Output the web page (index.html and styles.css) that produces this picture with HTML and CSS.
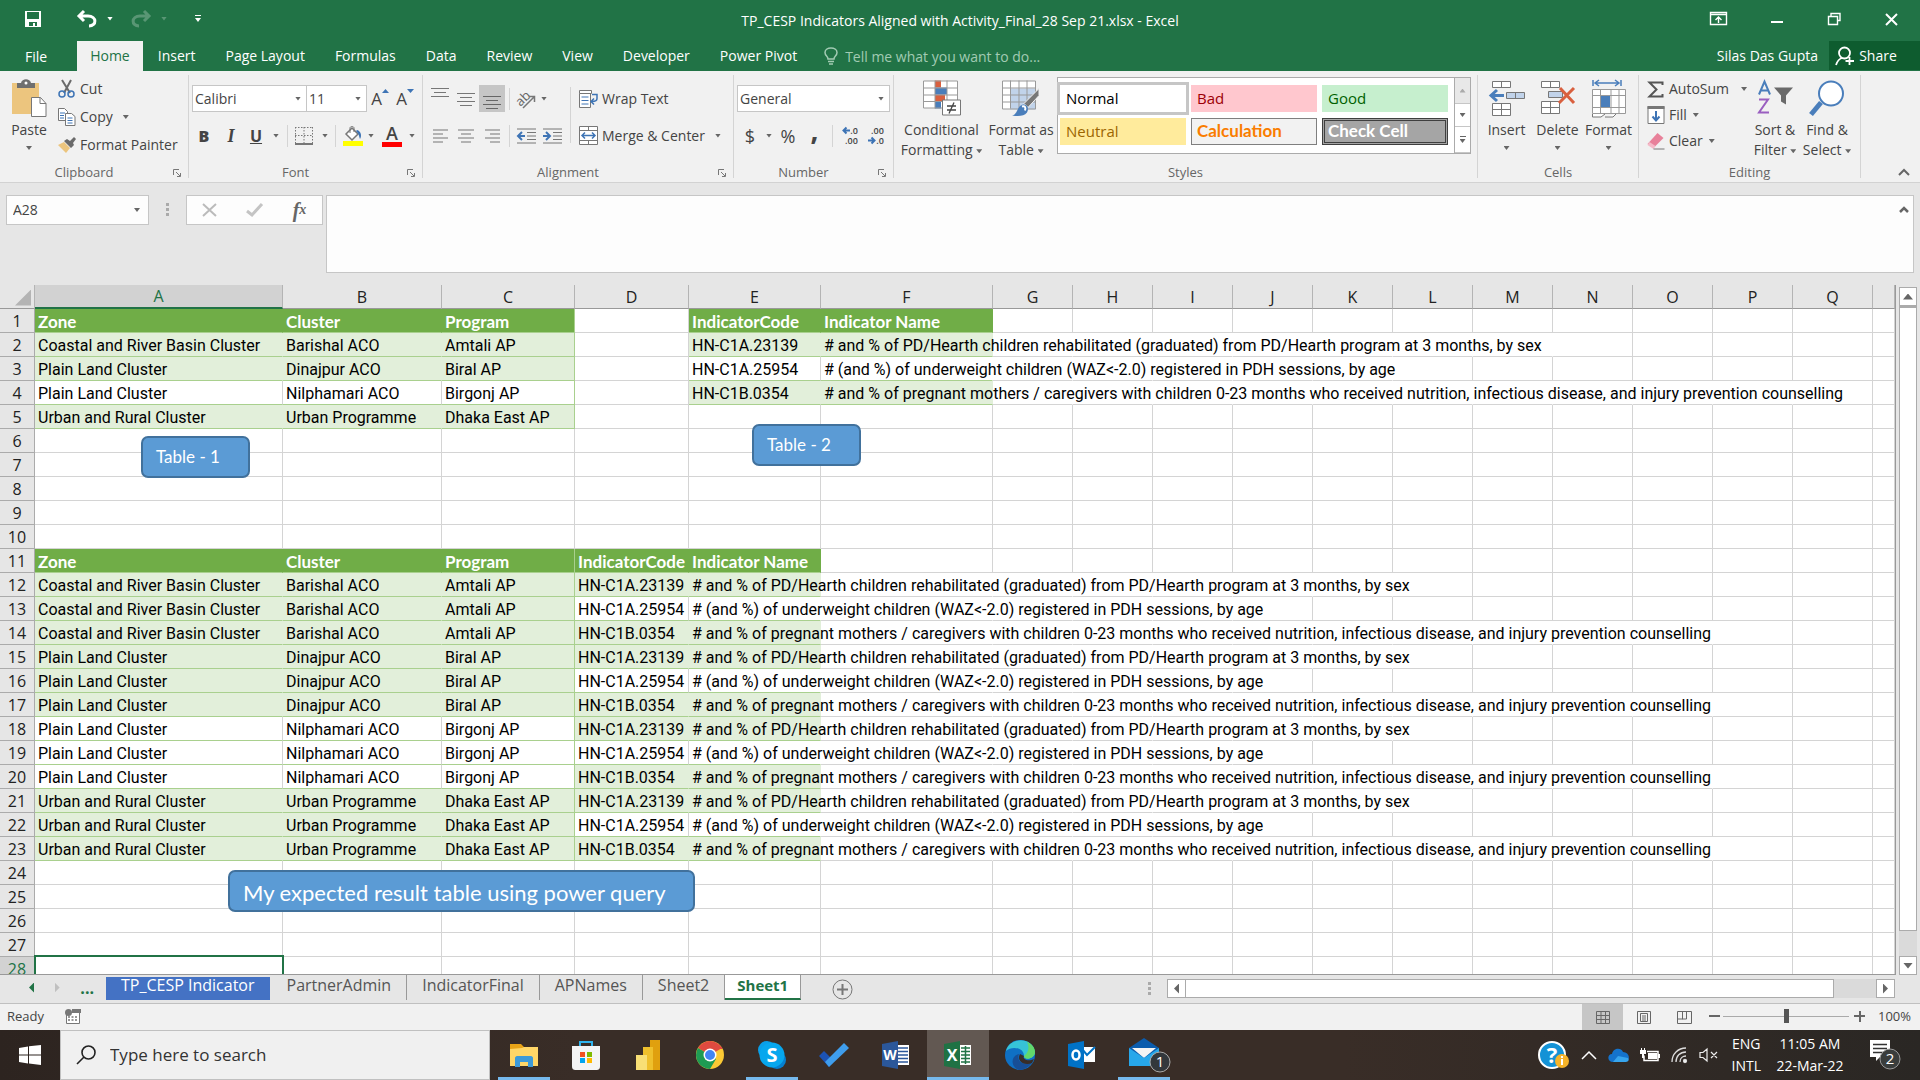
FILE: index.html
```html
<!DOCTYPE html>
<html lang="en">
<head>
<meta charset="utf-8">
<title>TP_CESP Indicators Aligned with Activity_Final_28 Sep 21.xlsx - Excel</title>
<link rel="stylesheet" href="styles.css">
</head>
<body>
<header class="titlebar">
  <div class="quick">
    <button aria-label="Save"><svg width="18" height="18" viewBox="0 0 18 18"><path d="M1 1h16v16H1z" fill="#fff"/><path d="M3 2h12v7H3zM5 12h8v4h-2v-3H9v3H5z" fill="#217346"/></svg></button>
    <button class="q-undo" aria-label="Undo"><svg width="20" height="18" viewBox="0 0 20 18"><path d="M7 1L2 6l5 5M2 6h9c9 0 9 10 1 10" fill="none" stroke="#fff" stroke-width="3"/></svg><i class="caret"></i></button>
    <button class="q-redo" aria-label="Redo"><svg width="20" height="18" viewBox="0 0 20 18"><path d="M13 1l5 5-5 5M18 6H9C0 6 0 16 8 16" fill="none" stroke="#fff" stroke-width="3"/></svg><i class="caret"></i></button>
    <button class="q-more" aria-label="Customize"><i class="bar"></i><i class="caret"></i></button>
  </div>
  <h1>TP_CESP Indicators Aligned with Activity_Final_28 Sep 21.xlsx - Excel</h1>
  <div class="window-buttons">
    <button aria-label="Ribbon display"><svg width="17" height="14" viewBox="0 0 17 14" fill="none" stroke="#fff"><path d="M.5.5h16v12H.5zM.5 2.500h16M8.500 11V5M5.500 8l3-3 3 3" stroke-width="1.400"/></svg></button>
    <button aria-label="Minimize"><svg width="13" height="14" viewBox="0 0 13 14"><path d="M0 9h12v2H0z" fill="#fff"/></svg></button>
    <button aria-label="Restore"><svg width="13" height="14" viewBox="0 0 13 14" fill="none" stroke="#fff"><path d="M.5 4.500h9v8h-9zM3 4V1.500h9v7H9.500" stroke-width="1.400"/></svg></button>
    <button aria-label="Close"><svg width="13" height="13" viewBox="0 0 13 13"><path d="M1 1l11 11M12 1L1 12" stroke="#fff" stroke-width="2"/></svg></button>
  </div>
</header>
<nav class="tabs">
  <a href="#" class="file">File</a><a href="#" class="on">Home</a><a href="#">Insert</a><a href="#">Page Layout</a><a href="#">Formulas</a><a href="#">Data</a><a href="#">Review</a><a href="#">View</a><a href="#">Developer</a><a href="#">Power Pivot</a>
  <button class="tell"><svg width="14" height="18" viewBox="0 0 14 18" fill="none" stroke="#a2cbb3" stroke-width="1.500"><path d="M4 12c0-3-3-3-3-6.500C1 2.500 4 1 7 1s6 1.500 6 4.500C13 9 10 9 10 12zM4 14.500h6M5 17h4"/></svg>Tell me what you want to do...</button>
  <span class="user">Silas Das Gupta</span>
  <button class="share"><svg width="20" height="20" viewBox="0 0 20 20" fill="none" stroke="#fff" stroke-width="1.800"><circle cx="9.500" cy="7" r="5.500"/><path d="M7 12c-4 1-5 4-6 7M14.500 11v8M10.500 15h8.500"/></svg>Share</button>
</nav>

<section class="ribbon">
  <div class="group g-clip">
    <div class="body">
      <button class="big paste"><svg width="35" height="39" viewBox="0 0 35 39"><path d="M0 4h27v31H0z" fill="#ecc57e"/><path d="M5 9V4h4c1-5 9-5 10 0h4v5z" fill="#6f6f6f"/><circle cx="14" cy="4" r="1.500" fill="#fff"/><path d="M19.500 18.500h9l5.500 6v13H19.500z" fill="#fff" stroke="#777"/><path d="M28 18.500v6h6" fill="none" stroke="#777"/></svg><span>Paste</span><i class="caret"></i></button>
      <div class="stack">
        <button class="line"><svg width="18" height="18" viewBox="0 0 18 18" fill="none"><path d="M4 0l8 13M13 0L6 13" stroke="#6a6a6a" stroke-width="2"/><circle cx="4" cy="14" r="3" stroke="#3e74b5" stroke-width="1.500"/><circle cx="13" cy="14" r="3" stroke="#3e74b5" stroke-width="1.500"/></svg>Cut</button>
        <button class="line"><svg width="18" height="18" viewBox="0 0 18 18"><g fill="#fff" stroke="#777"><path d="M.5.5h6l3 3v9h-9z"/><path d="M7.500 5.500h6l3.500 3v9H7.500z"/></g><path d="M2 5h5M2 7.500h4M2 10h4M9.500 10h5M9.500 12.500h5M9.500 15h5" stroke="#3e74b5"/></svg>Copy<i class="caret"></i></button>
        <button class="line"><svg width="18" height="16" viewBox="0 0 18 16"><path d="M0 8l6-3 6 6-4 5z" fill="#ecc57e"/><path d="M6 4l3-2 3 2 4-4 2 2-3 4 1 2-3 3z" fill="#6a6a6a"/></svg>Format Painter</button>
      </div>
    </div>
    <footer>Clipboard<svg class="launch" width="8" height="8" viewBox="0 0 8 8"><path d="M.5 6V.5H6M3 3l4 4M7.500 4v3.500H4" fill="none" stroke="#777"/></svg></footer>
  </div>

  <div class="group g-font">
    <div class="body rows">
      <div class="row font-a">
        <label class="combo"><select aria-label="Font"><option>Calibri</option></select><i class="caret"></i></label>
        <label class="combo"><select aria-label="Font size"><option>11</option></select><i class="caret"></i></label>
        <button class="grow">A<svg width="7" height="4" viewBox="0 0 7 4"><path d="M0 4l3.500-4L7 4z" fill="#3e74b5"/></svg></button>
        <button class="grow">A<svg width="7" height="4" viewBox="0 0 7 4"><path d="M0 0l3.500 4L7 0z" fill="#3e74b5"/></svg></button>
      </div>
      <div class="row font-b">
        <button class="ltr"><b>B</b></button><button class="ltr serif"><i>I</i></button><button class="ltr"><u>U</u></button><i class="caret"></i><i class="sep"></i>
        <button aria-label="Borders"><svg width="18" height="18" viewBox="0 0 18 18" fill="none" stroke="#777"><path d="M.5 0v17M9 0v17M17.500 0v17M0 .5h18M0 8.500h18" stroke-dasharray="1.500 1.500"/><path d="M0 17h18" stroke-width="2"/></svg></button><i class="caret"></i><i class="sep"></i>
        <button aria-label="Fill color"><svg width="20" height="20" viewBox="0 0 20 20"><path d="M9 2l6 6-6 6-6-6z" fill="#fff" stroke="#777" stroke-width="1.500"/><path d="M7 7V2c0-2 4-2 4 0v4" fill="none" stroke="#777"/><path d="M14 4c4 1 5 6 3 9-1-3-1-5-4-8z" fill="#3e74b5"/><path d="M0 15h20v5H0z" fill="#ff0"/></svg></button><i class="caret"></i>
        <button class="fontcolor" aria-label="Font color">A</button><i class="caret"></i>
      </div>
    </div>
    <footer>Font<svg class="launch" width="8" height="8" viewBox="0 0 8 8"><path d="M.5 6V.5H6M3 3l4 4M7.500 4v3.500H4" fill="none" stroke="#777"/></svg></footer>
  </div>

  <div class="group g-align">
    <div class="body">
      <div class="rows align-l">
        <div class="row align-a">
          <button aria-label="Top align"><svg class="up" width="18" height="16" viewBox="0 0 18 16"><path d="M0 1.500h18M3 5.500h12M0 9.500h18" stroke="#777" stroke-width="1.200"/></svg></button>
          <button aria-label="Middle align"><svg width="18" height="16" viewBox="0 0 18 16"><path d="M0 2.500h18M3 6.500h12M0 10.500h18M3 14.500h12" stroke="#777" stroke-width="1.200"/></svg></button>
          <button class="pressed" aria-label="Bottom align"><svg width="18" height="20" viewBox="0 0 18 20"><path d="M0 7.500h18M3 11.500h12M0 15.500h18M3 19.500h12" stroke="#666" stroke-width="1.200"/></svg></button>
          <i class="sep"></i>
          <button aria-label="Orientation"><svg width="20" height="20" viewBox="0 0 20 20"><text x="-1" y="15" font-size="13" fill="#666" transform="rotate(-45 5 11)">ab</text><path d="M6 19L17 8M12 7.500h5.500V13" fill="none" stroke="#777" stroke-width="1.500"/></svg></button><i class="caret"></i>
        </div>
        <div class="row align-b">
          <button aria-label="Align left"><svg width="15" height="14" viewBox="0 0 15 14"><path d="M0 1h15M0 5h10M0 9h15M0 13h10" stroke="#777" stroke-width="1.200"/></svg></button>
          <button aria-label="Center"><svg width="16" height="14" viewBox="0 0 16 14"><path d="M0 1h16M3 5h10M0 9h16M3 13h10" stroke="#777" stroke-width="1.200"/></svg></button>
          <button aria-label="Align right"><svg width="15" height="14" viewBox="0 0 15 14"><path d="M0 1h15M5 5h10M0 9h15M5 13h10" stroke="#777" stroke-width="1.200"/></svg></button>
          <i class="sep"></i>
          <button aria-label="Decrease indent"><svg width="19" height="16" viewBox="0 0 19 16" fill="none"><path d="M0 1h19M10 4.500h9M10 8h9M10 11.500h9M0 15h19" stroke="#777"/><path d="M8 8H2M5 4L1 8l4 4" stroke="#3e74b5" stroke-width="2"/></svg></button>
          <button aria-label="Increase indent"><svg width="19" height="16" viewBox="0 0 19 16" fill="none"><path d="M0 1h19M10 4.500h9M10 8h9M10 11.500h9M0 15h19" stroke="#777"/><path d="M0 8h6M3 4l4 4-4 4" stroke="#3e74b5" stroke-width="2"/></svg></button>
        </div>
      </div>
      <i class="sep tall"></i>
      <div class="rows">
        <button class="line row"><svg width="19" height="18" viewBox="0 0 19 18" fill="none"><path d="M.5.500h12v3H.5zM.5 3.500v14h11v-14" fill="#fff" stroke="#777"/><path d="M2.500 7h7M2.500 10.500h7M2.500 14h7" stroke="#3e74b5"/><path d="M13 4.500h5v4c0 2-2 3-5 3M15 8.500l-3 3 3 3" stroke="#3e74b5" stroke-width="1.500"/></svg>Wrap Text</button>
        <button class="line row"><svg width="19" height="19" viewBox="0 0 19 19" fill="none"><path d="M.500.500h18v18H.500zM0 4.500h19M0 14.500h19M9.500 0v4.500M9.500 14.500V19" fill="#fff" stroke="#777"/><path d="M3 9.500h13M6 6.500l-3 3 3 3M13 6.500l3 3-3 3" stroke="#3e74b5" stroke-width="1.500"/></svg>Merge &amp; Center<i class="caret"></i></button>
      </div>
    </div>
    <footer>Alignment<svg class="launch" width="8" height="8" viewBox="0 0 8 8"><path d="M.5 6V.5H6M3 3l4 4M7.500 4v3.500H4" fill="none" stroke="#777"/></svg></footer>
  </div>

  <div class="group g-number">
    <div class="body rows">
      <label class="combo row"><select aria-label="Number format"><option>General</option></select><i class="caret"></i></label>
      <div class="row num-b">
        <button class="sym">$</button><i class="caret"></i><button class="sym">%</button><button class="sym comma">,</button><i class="sep"></i>
        <button class="dec"><span><svg width="8" height="7" viewBox="0 0 8 7"><path d="M8 3.500H2M4.500.5l-3 3 3 3" fill="none" stroke="#3e74b5" stroke-width="2"/></svg>.0</span><span>.00</span></button>
        <button class="dec"><span>.00</span><span><svg width="8" height="7" viewBox="0 0 8 7"><path d="M0 3.500h6M3.500.5l3 3-3 3" fill="none" stroke="#3e74b5" stroke-width="2"/></svg>.0</span></button>
      </div>
    </div>
    <footer>Number<svg class="launch" width="8" height="8" viewBox="0 0 8 8"><path d="M.5 6V.5H6M3 3l4 4M7.500 4v3.500H4" fill="none" stroke="#777"/></svg></footer>
  </div>

  <div class="group g-styles">
    <div class="body">
      <button class="big cond"><svg width="38" height="36" viewBox="0 0 38 36"><path d="M.5.5h34v27H.5z" fill="#fff"/><path d="M12 0h6v7h-6zM12 14h10v7H12z" fill="#d9603f"/><path d="M12 7h12v7H12zM12 21h6v7h-6z" fill="#4a7ebb"/><path d="M.5.5h34v27H.5zM0 7.500h35M0 14.500h35M0 21h35M12 0v28M24 0v28" fill="none" stroke="#999"/><path d="M19.500 19.500h18v15h-18z" fill="#fff" stroke="#777"/><path d="M24 25.500h9M24 29.500h9M31 22l-5 11" stroke="#444" stroke-width="1.300"/></svg><span>Conditional</span><span>Formatting <i class="caret"></i></span></button>
      <button class="big fmt"><svg width="38" height="36" viewBox="0 0 38 36"><path d="M.5.5h33v28H.5z" fill="#fff"/><path d="M8 8h26v21H8z" fill="#c1d3ea"/><path d="M.5.5h33v28H.5zM0 7.500h34M0 14.500h34M0 21.500h34M8.500 0v28M17 0v28M25 0v28" fill="none" stroke="#999"/><path d="M37 8v7L26 27l-4-4z" fill="#777" stroke="#f1f1f1"/><path d="M10 35c6-1 5-10 11-11 5-1 6 5 4 8-3 4-9 4-15 3z" fill="#4a7ebb"/><path d="M20 26c3-1 4 1 3 4" stroke="#fff" stroke-width="2" fill="none"/></svg><span>Format as</span><span>Table <i class="caret"></i></span></button>
      <div class="gallery">
        <div class="swatches">
          <button class="normal">Normal</button><button class="bad">Bad</button><button class="good">Good</button>
          <button class="neutral">Neutral</button><button class="calc">Calculation</button><button class="check">Check Cell</button>
        </div>
        <div class="spin"><button class="off" aria-label="Up"><i class="caret flip"></i></button><button aria-label="Down"><i class="caret"></i></button><button aria-label="More"><i class="bar"></i><i class="caret"></i></button></div>
      </div>
    </div>
    <footer>Styles</footer>
  </div>

  <div class="group g-cells">
    <div class="body">
      <button class="big"><svg width="36" height="37" viewBox="0 0 36 37"><g fill="#fff" stroke="#777"><path d="M3.500 1.500h18v6h-18zM12.500 1.500v6M3.500 23.500h18v12h-18zM3.500 29.500h18M12.500 23.500v12"/><path d="M17.500 12.500h18v6h-18zM26.500 12.500v6" fill="#c1d3ea"/></g><path d="M15 15.500H2M8 10l-6 5.500L8 21" fill="none" stroke="#4a7ebb" stroke-width="3"/></svg><span>Insert</span><i class="caret"></i></button>
      <button class="big"><svg width="36" height="37" viewBox="0 0 36 37"><g fill="#fff" stroke="#777"><path d="M1.500 1.500h18v6h-18zM10.500 1.500v6M1.500 21.500h18v12h-18zM1.500 27.500h18M10.500 21.500v12"/><path d="M8.500 11.500h14v6h-14z" fill="#c1d3ea"/></g><path d="M20 8l14 15M34 8L19 23" fill="none" stroke="#d9603f" stroke-width="3"/></svg><span>Delete</span><i class="caret"></i></button>
      <button class="big"><svg width="36" height="39" viewBox="0 0 36 39"><path d="M2 1v6M30 1v6M4 4h24M8 1L4 4l4 3M24 1l4 3-4 3" fill="none" stroke="#4a7ebb" stroke-width="1.500"/><path d="M1.500 10.500h33v24h-33zM1 16.500h34M1 28.500h34M9.500 10v25M20 10v25M28 10v25" fill="#fff" stroke="#999"/><path d="M10 17h9v11h-9z" fill="#4a7ebb"/><path d="M1.500 35v3H10l4-3M14 38h8l3-3" fill="#fff" stroke="#777"/></svg><span>Format</span><i class="caret"></i></button>
    </div>
    <footer>Cells</footer>
  </div>

  <div class="group g-edit">
    <div class="body">
      <div class="stack">
        <button class="line"><svg width="17" height="17" viewBox="0 0 17 17"><path d="M15 4V1.500H2L9 8.500 2 15.500h13V13" fill="none" stroke="#555" stroke-width="2"/></svg>AutoSum<i class="caret"></i></button>
        <button class="line"><svg width="17" height="18" viewBox="0 0 17 18"><path d="M.5.5h16v17H.5z" fill="#fff" stroke="#777"/><path d="M0 0h17v3H0z" fill="#777"/><path d="M8.500 5v9M5 10.500l3.500 4 3.500-4" fill="none" stroke="#3e74b5" stroke-width="2"/></svg>Fill<i class="caret"></i></button>
        <button class="line"><svg width="17" height="17" viewBox="0 0 17 17"><path d="M0 11L10 0l6 5L6 15z" fill="#e8819a"/><path d="M2 9l6 4-2 3-6-4z" fill="#f5b9c7"/><path d="M6 16h11" stroke="#777"/></svg>Clear<i class="caret"></i></button>
      </div>
      <button class="big"><svg width="35" height="36" viewBox="0 0 35 36"><g fill="none" stroke-width="2"><path d="M1 14L6.500 1 12 14M3 10h7" stroke="#4a7ebb"/><path d="M1 19h9L1 32h10" stroke="#9a5fc0"/></g><path d="M16 7h19l-7 8v9l-5-3v-6z" fill="#6a6a6a"/></svg><span>Sort &amp;</span><span>Filter <i class="caret"></i></span></button>
      <button class="big"><svg width="36" height="36" viewBox="0 0 36 36"><path d="M12 22L2 34" stroke="#4a7ebb" stroke-width="5"/><circle cx="22" cy="13" r="12" fill="#fff" stroke="#4a7ebb" stroke-width="2"/></svg><span>Find &amp;</span><span>Select <i class="caret"></i></span></button>
    </div>
    <footer>Editing</footer>
  </div>
  <button class="collapse" aria-label="Collapse ribbon"><svg width="12" height="8" viewBox="0 0 12 8"><path d="M1 7l5-5 5 5" fill="none" stroke="#666" stroke-width="2"/></svg></button>
</section>

<section class="formula">
  <label class="namebox"><input aria-label="Name box" value="A28"><i class="caret"></i></label>
  <i class="dots"></i>
  <div class="fx">
    <button aria-label="Cancel"><svg width="15" height="14" viewBox="0 0 15 14"><path d="M1 1l13 12M14 1L1 13" stroke="#bbb" stroke-width="2"/></svg></button>
    <button aria-label="Enter"><svg width="17" height="14" viewBox="0 0 17 14"><path d="M1 8l5 4L16 1" fill="none" stroke="#c4c4c4" stroke-width="3"/></svg></button>
    <button class="fn" aria-label="Insert function">f<sub>x</sub></button>
  </div>
  <div class="entry"><textarea aria-label="Formula bar"></textarea><svg width="10" height="7" viewBox="0 0 10 7"><path d="M1 6l4-4 4 4" fill="none" stroke="#666" stroke-width="2.500"/></svg></div>
</section>

<main>
  <div class="sheet">
    <table id="grid"></table>
    <div class="selection"></div>
    <div class="shape one">Table - 1</div>
    <div class="shape two">Table - 2</div>
    <div class="shape three">My expected result table using power query</div>
  </div>
  <div class="vscroll"><button aria-label="Scroll up"><i class="caret flip"></i></button><div class="thumb"></div><div class="track"></div><button aria-label="Scroll down"><i class="caret"></i></button></div>
</main>

<section class="sheetbar">
  <div class="arrows"><i class="left"></i><i class="right"></i><b>...</b></div>
  <a href="#" class="blue">TP_CESP Indicator</a><a href="#">PartnerAdmin</a><a href="#">IndicatorFinal</a><a href="#">APNames</a><a href="#">Sheet2</a><a href="#" class="cur">Sheet1</a>
  <button class="add" aria-label="New sheet"><svg width="21" height="21" viewBox="0 0 21 21" fill="none" stroke="#777"><circle cx="10.500" cy="10.500" r="9.500"/><path d="M10.500 5v11M5 10.500h11" stroke-width="2"/></svg></button>
  <i class="dots"></i>
  <div class="hscroll"><button aria-label="Scroll left"><i class="left"></i></button><div class="thumb"></div><div class="track"></div><button aria-label="Scroll right"><i class="right"></i></button></div>
</section>

<section class="status">
  <span>Ready</span>
  <svg width="16" height="15" viewBox="0 0 16 15"><path d="M1.500 3.500h13v11h-13z" fill="#fff" stroke="#777"/><path d="M7 0h9v4H7z" fill="#777"/><circle cx="3.500" cy="3.500" r="3.500" fill="#777"/><path d="M3 8h10M3 11h10" stroke="#777" stroke-width="1.500" stroke-dasharray="2 1.500"/></svg>
  <div class="views">
    <button class="pressed" aria-label="Normal view"><svg width="14" height="13" viewBox="0 0 14 13"><path d="M.5.5h13v12H.5zM0 4.500h14M0 8.500h14M5 0v13M9.500 0v13" fill="none" stroke="#666"/></svg></button>
    <button aria-label="Page layout view"><svg width="14" height="13" viewBox="0 0 14 13"><path d="M.5.5h13v12H.5zM3.500 2.500h7v8h-7zM5 5h4M5 7h4M5 9h4" fill="none" stroke="#666"/></svg></button>
    <button aria-label="Page break view"><svg width="15" height="13" viewBox="0 0 15 13"><path d="M.5.5h14v12H.5zM5.500 0v8H0M9.500 0v8H5" fill="none" stroke="#666"/></svg></button>
  </div>
  <button class="minus" aria-label="Zoom out"></button><input type="range" aria-label="Zoom" min="0" max="200" value="101"><button class="plus" aria-label="Zoom in"></button>
  <span class="pct">100%</span>
</section>

<footer class="taskbar">
  <button class="start" aria-label="Start"><svg width="22" height="20" viewBox="0 0 22 20" fill="#fff"><path d="M0 3l9-1.500V9.500H0zM10 1.300L22 0v9.500H10zM0 10.500h9v8L0 17zM10 10.500h12V20l-12-1.500z"/></svg></button>
  <label class="search"><svg width="22" height="20" viewBox="0 0 22 20" fill="none" stroke="#222" stroke-width="1.600"><circle cx="13.500" cy="7.500" r="6.500"/><path d="M9 12l-7 7"/></svg><input placeholder="Type here to search"></label>
  <div class="apps">
    <button class="run" aria-label="File Explorer"><svg width="28" height="24" viewBox="0 0 28 24"><path d="M0 1h11l3 3h14v7H0z" fill="#e8a317"/><path d="M0 6l12-1 2-1h14v19H0z" fill="#ffd667"/><path d="M5 24V15c0-1 1-2 2-2h14c1 0 2 1 2 2v9h-5v-5h-8v5z" fill="#3d9ad8"/></svg></button>
    <button aria-label="Store"><svg width="28" height="30" viewBox="0 0 28 30"><path d="M8 7V2h12v5" fill="none" stroke="#30b4ee" stroke-width="2"/><path d="M0 6h28v20c0 3-1 4-4 4H4c-3 0-4-1-4-4z" fill="#f4f4f4"/><path d="M8 12h5v5H8z" fill="#f25022"/><path d="M15 12h5v5h-5z" fill="#7fba00"/><path d="M8 18h5v5H8z" fill="#00a4ef"/><path d="M15 18h5v5h-5z" fill="#ffb900"/></svg></button>
    <button aria-label="Power BI"><svg width="24" height="30" viewBox="0 0 24 30"><path d="M14 0h10v30H14z" fill="#e0a00e"/><path d="M7 7h10v23H7z" fill="#efc02c"/><path d="M0 15h11v15H0z" fill="#f8df75"/></svg></button>
    <button aria-label="Chrome"><svg width="28" height="28" viewBox="0 0 28 28"><circle cx="14" cy="14" r="14" fill="#fcc934"/><path d="M14 14L1.900 7A14 14 0 0 1 26.100 7z" fill="#e04a3f"/><path d="M14 14L1.900 7A14 14 0 0 0 14 28l6-10z" fill="#1e9b53"/><path d="M14 7h12.100" stroke="#e04a3f" stroke-width="2"/><circle cx="14" cy="14" r="6.500" fill="#fff"/><circle cx="14" cy="14" r="5" fill="#4285f4"/></svg></button>
    <button class="run" aria-label="Skype"><svg width="28" height="28" viewBox="0 0 28 28"><circle cx="9" cy="9" r="9" fill="#0a9fe8"/><circle cx="19" cy="19" r="9" fill="#0580d0"/><circle cx="14" cy="14" r="12.500" fill="#07a7ee"/><text x="14" y="21" font-size="20" font-weight="700" fill="#fff" text-anchor="middle">S</text></svg></button>
    <button aria-label="To Do"><svg width="30" height="26" viewBox="0 0 30 26"><path d="M0 14l5-5 9 9-4 7z" fill="#1c53b5"/><path d="M10 25l-4-5L25 1l5 5z" fill="#3f9dec"/></svg></button>
    <button aria-label="Word"><svg width="28" height="28" viewBox="0 0 28 28"><path d="M14 4h13v20H14z" fill="#fff"/><path d="M16 7h10M16 10.500h10M16 14h10M16 17.500h10M16 21h10" stroke="#2b579a" stroke-width="1.500"/><path d="M0 3l16-3v28L0 25z" fill="#2b579a"/><text x="8" y="19" font-size="14" font-weight="700" fill="#fff" text-anchor="middle">W</text></svg></button>
    <button class="run active" aria-label="Excel"><svg width="28" height="28" viewBox="0 0 28 28"><path d="M14 4h13v20H14z" fill="#fff"/><path d="M17 7h9M17 10.500h9M17 14h9M17 17.500h9M17 21h9M21.500 5v18" stroke="#217346" stroke-width="1.500"/><path d="M0 3l16-3v28L0 25z" fill="#1f7244"/><text x="8" y="20" font-size="16" font-weight="700" fill="#fff" text-anchor="middle">X</text></svg></button>
    <button aria-label="Edge"><svg width="30" height="30" viewBox="0 0 30 30"><circle cx="15" cy="15" r="15" fill="#0f70c4"/><path d="M1 11C4-3 28-4 30 12c0 7-11 9-11 4 0-9-13-10-18-5z" fill="#36c3d8"/><path d="M22 2c5 2 8 6 8 10 0 7-11 9-11 4 4-3 6-8 3-14z" fill="#62d86b"/><path d="M14 14c-3 8 5 12 13 8 0 2-6 8-13 8-7-2-10-13 0-16z" fill="#174e96"/><path d="M19 16c-2 3 4 6 10 3l-2 4c-8 3-16-2-12-9z" fill="#392d27"/></svg></button>
    <button aria-label="Outlook"><svg width="28" height="28" viewBox="0 0 28 28"><path d="M14 6h13v15H14z" fill="#fff"/><path d="M14 8l5 6 8-8" fill="none" stroke="#0072c6" stroke-width="2"/><path d="M0 3l16-3v28L0 25z" fill="#0072c6"/><ellipse cx="8" cy="14" rx="3.500" ry="4.500" fill="none" stroke="#fff" stroke-width="2.500"/></svg></button>
    <button class="run" aria-label="Mail"><svg width="42" height="34" viewBox="0 0 42 34"><path d="M0 10L15 0l15 10v18H0z" fill="#0b5cad"/><path d="M3 10h24L15 20z" fill="#f4f4f4"/><path d="M0 10l15 10 15-10v18H0z" fill="#27a7ea"/><circle cx="31" cy="24" r="10" fill="#33383c" stroke="#aaa"/><text x="31" y="29" font-size="15" fill="#fff" text-anchor="middle">1</text></svg></button>
  </div>
  <div class="tray">
    <svg width="32" height="28" viewBox="0 0 32 28"><circle cx="14" cy="14" r="13" fill="#1492d6" stroke="#fff" stroke-width="2"/><text x="14" y="22" font-size="22" font-weight="700" fill="#fff" text-anchor="middle">?</text><circle cx="24" cy="20" r="7" fill="#f5b32a"/><path d="M24 18v6M24 15v2" stroke="#fff" stroke-width="2"/></svg>
    <svg width="16" height="10" viewBox="0 0 16 10"><path d="M1 9l7-7 7 7" fill="none" stroke="#fff" stroke-width="1.500"/></svg>
    <svg width="21" height="14" viewBox="0 0 21 14"><path d="M5 14C-1 14-1 6 4 6 5 0 13-1 15 4c7 0 8 9 2 10z" fill="#1473cc"/><path d="M5 14l5-6 10 2c2 3-1 4-3 4z" fill="#37a5ed"/></svg>
    <svg width="20" height="15" viewBox="0 0 20 15"><path d="M7 3.500h11v9H4v-5" fill="none" stroke="#fff" stroke-width="1.500"/><path d="M8 5h9v6H8zM18 6h2v4h-2zM0 2h6v4H0zM2 6h2v4H2zM1 0h1v2H1zM4 0h1v2H4z" fill="#fff"/></svg>
    <svg width="17" height="16" viewBox="0 0 17 16" fill="none" stroke="#ddd" stroke-width="1.300"><path d="M1 15C1 7 7 1 15 1M5 15C5 9 9 5 15 5M9 15c0-4 3-6 6-6"/><circle cx="14" cy="14" r="1.500" fill="#fff"/></svg>
    <svg width="20" height="14" viewBox="0 0 20 14" fill="none" stroke="#eee" stroke-width="1.200"><path d="M1 4.500h3l4-3.500v12L4 9.500H1zM12 4l6 6M18 4l-6 6"/></svg>
    <div class="lang">ENG<br>INTL</div>
    <div class="clock">11:05 AM<br>22-Mar-22</div>
    <svg width="32" height="32" viewBox="0 0 32 32"><path d="M0 1h20v17H10l-4 4v-4H0z" fill="#fff"/><path d="M3 5.500h14M3 9.500h14M3 13.500h10" stroke="#333" stroke-width="1.500"/><circle cx="20" cy="20" r="10" fill="#3a3d3c" stroke="#999"/><text x="20" y="25" font-size="15" fill="#fff" text-anchor="middle">2</text></svg>
  </div>
</footer>
<script src="grid.js"></script>
</body>
</html>
```
FILE: styles.css
```css
* { box-sizing: border-box; }
body { margin: 0; height: 100vh; display: flex; flex-direction: column; overflow: hidden; background: #e6e6e6; color: #444; font: 14px/20px "Open Sans", "Noto Sans", sans-serif; }
button { margin: 0; padding: 0; border: 0; background: none; color: inherit; font: inherit; display: flex; align-items: center; justify-content: center; flex: none; }
a { color: inherit; text-decoration: none; }
svg { flex: none; display: block; overflow: visible; }
text { font-family: "Open Sans", sans-serif; }
input, select, textarea { font: inherit; color: inherit; border: 0; margin: 0; background: none; outline: 0; }
.caret { flex: none; display: inline-block; width: 6px; height: 4px; background: #666; clip-path: polygon(0 0, 100% 0, 50% 100%); }
.caret.flip { clip-path: polygon(0 100%, 100% 100%, 50% 0); }
.left, .right { width: 5px; height: 10px; background: #666; clip-path: polygon(100% 0, 100% 100%, 0 50%); }
.right { clip-path: polygon(0 0, 100% 50%, 0 100%); }
.bar { width: 6px; height: 1px; background: #666; }
.sep { width: 1px; height: 22px; background: #d4d4d4; }
.dots { width: 3px; height: 14px; background: repeating-linear-gradient(#aaa 0 3px, transparent 3px 5px); }

.titlebar { height: 41px; flex: none; display: grid; grid-template-columns: 1fr auto 1fr; align-items: center; background: #217346; color: #fff; }
.titlebar h1 { margin: 0; font-size: 14px; font-weight: 400; }
.titlebar .caret, .titlebar .bar { background: #fff; }
.quick { display: flex; align-items: center; padding: 0 0 4px 24px; }
.q-undo { margin-left: 35px; gap: 10px; }
.q-redo { margin-left: 18px; gap: 10px; opacity: .25; }
.q-more { margin-left: 28px; flex-direction: column; gap: 2px; }
.window-buttons { display: flex; justify-content: flex-end; align-items: center; gap: 44px; padding: 0 22px 3px 0; }

.tabs { height: 30px; flex: none; display: flex; align-items: stretch; background: #217346; color: #fff; line-height: 29px; }
.tabs a { padding: 0 15px; white-space: nowrap; }
.tabs .file { padding: 1px 30px 0 25px; }
.tabs .on { background: #f1f1f1; color: #217346; padding: 0 13px; }
.tell { color: #a2cbb3; gap: 7px; margin-left: 12px; }
.user { margin-left: auto; padding-right: 11px; }
.share { background: #0e5c2f; width: 91px; height: 29px; gap: 4px; padding-right: 17px; }

.ribbon { height: 112px; flex: none; display: flex; padding-top: 4px; background: #f1f1f1; border-bottom: 1px solid #d2d2d2; position: relative; }
.group { height: 103px; flex: none; display: flex; flex-direction: column; border-right: 1px solid #d4d4d4; }
.group .body { height: 87px; flex: none; display: flex; }
.group footer { position: relative; height: 16px; font-size: 13px; line-height: 20px; text-align: center; color: #666; }
.launch { position: absolute; right: 7px; top: 7px; }
.g-clip { width: 189px; }
.g-font { width: 234px; }
.g-clip footer, .g-font footer, .g-align footer, .g-number footer { padding-right: 20px; }
.g-align { width: 311px; }
.g-number { width: 160px; }
.g-styles { width: 584px; }
.g-cells { width: 161px; }
.g-edit { width: 222px; }
.rows, .group .body.rows { display: flex; flex-direction: column; gap: 10px; padding-top: 10px; }
.row { height: 27px; display: flex; align-items: center; }
.line { gap: 4px; white-space: nowrap; justify-content: flex-start; }
.line .caret { margin-left: 6px; }
.stack { display: flex; flex-direction: column; }
.stack .line { height: 28px; }
.stack .line svg { width: 18px; }
.big { flex-direction: column; justify-content: flex-start; padding-top: 4px; white-space: nowrap; }
.big svg { height: 39px; margin-bottom: 2px; }
.big > .caret { margin-top: 6px; }
.big .caret { vertical-align: middle; }
.paste { width: 58px; }

.combo { background: #fff; border: 1px solid #c6c6c6; height: 27px; display: flex; align-items: center; padding: 0 5px 0 2px; }
.combo select { appearance: none; flex: 1; min-width: 0; }
.font-a { display: grid; grid-template-columns: 115px 60px 26px 24px; padding-left: 3px; }
.font-a .combo + .combo { margin-left: -1px; }
.grow { align-items: flex-start; font-size: 17px; }
.font-b { display: grid; grid-template-columns: 26px 28px 22px 18px 4px 30px 12px 8px 28px 8px 34px 6px; padding-left: 2px; justify-items: center; }
.ltr { font-size: 16px; font-weight: 700; }
.serif { font-family: "Liberation Serif", serif; font-size: 18px; }
.fontcolor { width: 20px; height: 22px; border-bottom: 5px solid #f00; font-size: 18px; font-weight: 600; line-height: 16px; }
.align-l { padding-left: 4px; width: 144px; }
.align-a, .align-b { display: grid; grid-template-columns: 26px 26px 26px 8px 28px 6px; justify-items: center; }
.align-b { grid-template-columns: 26px 26px 26px 8px 27px 25px; }
.up { margin-bottom: 8px; }
.pressed { background: #c6c6c6; width: 26px; height: 27px; }
.sep.tall { height: 56px; margin: 12px 8px 0 3px; }
.combo.row { width: 153px; margin-left: 3px; }
.num-b { display: grid; grid-template-columns: 26px 12px 26px 27px 8px 28px 24px; padding-left: 3px; justify-items: center; }
.sym { font-size: 18px; }
.comma { font-size: 28px; font-weight: 700; line-height: 12px; padding-bottom: 14px; }
.dec { flex-direction: column; align-items: flex-end; font-size: 9px; line-height: 10px; font-weight: 600; }
.dec span { display: flex; align-items: center; }
.cond { width: 95px; }
.fmt { width: 64px; }
.gallery { margin: 2px 0 0 4px; width: 414px; height: 77px; display: flex; border: 1px solid #ababab; background: #fff; }
.swatches { width: 396px; display: grid; grid-template-columns: 126px 126px 126px; grid-auto-rows: 27px; gap: 6px 5px; padding: 7px 0 0 2px; }
.swatches button { justify-content: flex-start; padding: 0 0 2px 6px; font-size: 15px; color: #000; }
.swatches .normal { outline: 3px solid #c6c6c6; }
.swatches .bad { background: #ffc7ce; color: #9c0006; }
.swatches .good { background: #c6efce; color: #006100; }
.swatches .neutral { background: #ffeb9c; color: #9c6500; }
.swatches .calc { background: #f2f2f2; color: #fa7d00; border: 1px solid #7f7f7f; font: 700 17px Lato, sans-serif; padding-left: 5px; }
.swatches .check { background: #a5a5a5; color: #fff; border: 3px double #3f3f3f; font: 700 17px Lato, sans-serif; padding-left: 3px; }
.spin { flex: 1; display: grid; grid-template-rows: 26px 23px 26px; border-left: 1px solid #ababab; }
.spin button { flex-direction: column; gap: 2px; border-bottom: 1px solid #c6c6c6; }
.spin .off { background: #e8e8e8; }
.spin .off .caret { background: #aaa; }
.g-cells .body { padding-left: 3px; }
.g-cells .big { width: 51px; }
.g-edit .body { padding-left: 8px; }
.g-edit .stack { width: 102px; padding-top: 1px; }
.g-edit .stack .line { height: 26px; }
.g-edit .stack .line .caret { margin-left: 2px; }
.g-edit .stack .line:first-child .caret { margin-left: 8px; }
.g-edit .big { width: 52px; }
.collapse { position: absolute; right: 10px; bottom: 6px; }

.formula { height: 102px; flex: none; display: flex; align-items: flex-start; padding: 12px 6px 0; }
.namebox { width: 143px; height: 30px; display: flex; align-items: center; background: #fdfdfd; border: 1px solid #c6c6c6; padding: 0 8px 0 6px; }
.namebox input { flex: 1; min-width: 0; padding: 0; }
.formula .dots { margin: 8px 17px 0 17px; }
.fx { width: 137px; height: 30px; display: grid; grid-template-columns: 1fr 1fr 1fr; background: #fdfdfd; border: 1px solid #c6c6c6; }
.fn { font: italic 700 20px/20px "Liberation Serif", serif; color: #666; }
.fn sub { font-size: 14px; }
.entry { flex: 1; height: 78px; margin-left: 3px; background: #fdfdfd; border: 1px solid #c6c6c6; display: flex; }
.entry textarea { flex: 1; resize: none; }
.entry svg { margin: 10px 4px 0; }

main { flex: 1; min-height: 0; display: flex; }
.sheet { flex: 1; position: relative; overflow: hidden; border-right: 1px solid #999; border-bottom: 1px solid #999; background: #fff; }
#grid { table-layout: fixed; width: 100%; border-spacing: 0; color: #000; font: 16px/21px Roboto, sans-serif; }
#grid th, #grid td { height: 24px; padding: 2px 0 0 3px; border-right: 1px solid #d4d4d4; border-bottom: 1px solid #d4d4d4; text-align: left; white-space: nowrap; }
#grid .head { background: #e6e6e6; color: #222; font: 16px/22px "Open Sans", sans-serif; text-align: center; padding: 0; border-color: #ababab; }
#grid thead .head { border-bottom-color: #999; border-right-color: #b4b4b4; }
#grid thead .picked { border-bottom: 2px solid #217346; }
#grid .head.picked { background: #d2d2d2; color: #217346; }
#grid .corner::after { content: ""; display: block; width: 16px; height: 16px; margin: 2px 0 0 15px; background: #b4b4b4; clip-path: polygon(100% 0, 100% 100%, 0 100%); }
#grid td.title { background: #70ad47; color: #fff; font: 700 17px/21px Lato, sans-serif; border-right-color: #70ad47; border-bottom-color: #a9d08e; }
#grid td.band { background: #e2efda; border-right-color: #e2efda; border-bottom-color: #a9d08e; }
#grid td.plain { border-bottom-color: #a9d08e; }
#grid td.edge { border-right-color: #a9d08e; }
#grid td.open { border-right-color: transparent; }
.selection { position: absolute; left: 34px; top: 670px; width: 250px; height: 28px; border: 2px solid #217346; }
.shape { position: absolute; width: 109px; height: 42px; padding: 0 13px; display: flex; align-items: center; white-space: nowrap; background: #5b9bd5; border: 2px solid #41719c; border-radius: 7px; color: #fff; font: 17px/20px Lato, sans-serif; }
.shape.one { left: 141px; top: 151px; }
.shape.two { left: 752px; top: 139px; }
.shape.three { left: 228px; top: 585px; width: 467px; padding-top: 3px; font-size: 22px; }
.vscroll { width: 24px; padding: 2px 3px 0; display: flex; flex-direction: column; }
.vscroll button, .hscroll button { height: 19px; border: 1px solid #ababab; background: #fff; }
.vscroll .caret { width: 10px; height: 6px; }
.vscroll .thumb { flex: 1; background: #fff; border: 1px solid #ababab; border-top: 2px solid #ababab; }
.vscroll .track { height: 25px; background: #dadada; }

.sheetbar { height: 29px; flex: none; display: flex; align-items: stretch; color: #555; font-size: 16px; line-height: 20px; border-bottom: 1px solid #c0c0c0; padding-right: 25px; }
.arrows { width: 104px; display: flex; align-items: center; padding: 0 10px 3px 29px; justify-content: space-between; color: #217346; }
.arrows .left { background: #217346; }
.arrows .right { background: #c0c0c0; }
.sheetbar a { height: 25px; padding: 0 15px; border-right: 1px solid #999; white-space: nowrap; }
.sheetbar .blue { margin-top: 2px; height: 23px; padding: 0 15px; border: 2px solid #e6e6e6; border-width: 0 2px; line-height: 16px; background: #4472c4; color: #fff; }
.sheetbar .cur { background: #fff; color: #217346; font-size: 15px; font-weight: 700; border-bottom: 2px solid #217346; padding: 0 12px; }
.add { margin-left: 31px; align-self: center; }
.sheetbar .dots { margin: 7px 16px 0 auto; }
.hscroll { width: 728px; height: 19px; margin-top: 4px; display: flex; }
.hscroll button { width: 19px; }
.hscroll .thumb { flex: 1; background: #fff; border: 1px solid #ababab; border-left: 0; }
.hscroll .track { width: 42px; background: #dadada; }

.status { height: 26px; flex: none; display: flex; align-items: center; background: #f1f1f1; font-size: 13px; padding: 0 9px 2px 7px; }
.status > svg { margin-left: 21px; }
.views { margin: 0 0 -2px auto; display: flex; }
.views button { width: 41px; height: 26px; }
.minus, .plus { width: 11px; height: 11px; background: linear-gradient(#666, #666) center / 11px 2px no-repeat; }
.minus { margin-left: 4px; }
.plus { background: linear-gradient(#666, #666) center / 11px 2px no-repeat, linear-gradient(#666, #666) center / 2px 11px no-repeat; }
.status input { appearance: none; width: 126px; height: 14px; margin: 0 5px 0 3px; background: linear-gradient(#aaa, #aaa) center / 100% 1px no-repeat; }
.status input::-webkit-slider-thumb { appearance: none; width: 5px; height: 14px; background: #555; }
.pct { width: 46px; text-align: right; }

.taskbar { height: 50px; flex: none; display: flex; background: linear-gradient(90deg, #2d2420, #392d27 30%, #392d27 70%, #2a2724); color: #fff; }
.start { width: 60px; }
.search { width: 430px; display: flex; align-items: center; gap: 13px; padding-left: 14px; background: #f0f0f0; border: 1px solid #c0c0c0; }
.search input { flex: 1; min-width: 0; padding: 0; font-size: 17px; }
.search input::placeholder { color: #333; opacity: 1; }
.apps { display: flex; padding-left: 3px; }
.apps button { width: 62px; }
.run { background: linear-gradient(#76b9ed, #76b9ed) bottom / 52px 3px no-repeat; }
.run.active { background: linear-gradient(#76b9ed, #76b9ed) bottom / 100% 3px no-repeat, #625852; }
.apps button:last-child { padding-left: 12px; background-position: 5px 100%; }
.tray { margin-left: auto; display: flex; align-items: center; gap: 11px; padding-right: 18px; text-align: center; line-height: 22px; }
.clock { width: 76px; margin-right: 11px; }
.lang { padding-left: 2px; }
```
FILE: grid.js
```js
// Column letters with their pixel widths; the last strip takes what is left.
const columns = [["A", 248], ["B", 159], ["C", 133], ["D", 114], ["E", 132], ["F", 172]]
  .concat([..."GHIJKLMNOPQ"].map(letter => [letter, 80]), [["", null]]);

const names = {
  "HN-C1A.23139": "# and % of PD/Hearth children rehabilitated (graduated) from PD/Hearth program at 3 months, by sex",
  "HN-C1A.25954": "# (and %) of underweight children (WAZ<-2.0) registered in PDH sessions, by age",
  "HN-C1B.0354": "# and % of pregnant mothers / caregivers with children 0-23 months who received nutrition, infectious disease, and injury prevention counselling"
};
const codes = Object.keys(names);
const zones = [
  ["Coastal and River Basin Cluster", "Barishal ACO", "Amtali AP", "band"],
  ["Plain Land Cluster", "Dinajpur ACO", "Biral AP", "band"],
  ["Plain Land Cluster", "Nilphamari ACO", "Birgonj AP", "plain"],
  ["Urban and Rural Cluster", "Urban Programme", "Dhaka East AP", "band"]
];

const cells = {};
const put = (row, col, text, style) => { cells[row + "," + col] = { text, style }; };

function putZone(row, zone) {
  for (let c = 0; c < 3; c++) put(row, c, zone[c], zone[3] + (c === 2 ? " edge" : ""));
}
// Writes a code and its name; a long name runs over the columns up to `last`.
function putCode(row, col, index, last) {
  const style = index === 1 ? "plain" : "band";
  put(row, col, codes[index], style);
  put(row, col + 1, names[codes[index]], style + (index === 1 ? " open" : ""));
  for (let c = col + 2; c < last; c++) put(row, c, "", "open");
}

["Zone", "Cluster", "Program"].forEach((t, c) => { put(1, c, t, "title" + (c === 2 ? " edge" : "")); put(11, c, t, "title" + (c === 2 ? " edge" : "")); });
["IndicatorCode", "Indicator Name"].forEach((t, c) => { put(1, c + 4, t, "title"); put(11, c + 3, t, "title"); });
zones.forEach((zone, i) => putZone(i + 2, zone));
[13, 11, 16].forEach((last, i) => putCode(i + 2, 4, i, last));
zones.forEach((zone, z) => [11, 9, 15].forEach((last, i) => {
  const row = 12 + z * 3 + i;
  putZone(row, zone);
  putCode(row, 3, i, last);
}));

const grid = document.getElementById("grid");
const group = document.createElement("colgroup");
[["", 35], ...columns].forEach(([, width]) => {
  const col = document.createElement("col");
  if (width) col.style.width = width + "px";
  group.append(col);
});
grid.append(group);

function head(row, text, picked, scope) {
  const th = document.createElement("th");
  th.className = "head" + (picked ? " picked" : "");
  th.scope = scope;
  th.textContent = text;
  row.append(th);
  return th;
}
const letters = grid.createTHead().insertRow();
head(letters, "", false, "col").classList.add("corner");
columns.forEach(([letter]) => head(letters, letter, letter === "A", "col"));

const body = grid.createTBody();
for (let r = 1; r <= 28; r++) {
  const row = body.insertRow();
  head(row, r, r === 28, "row");
  columns.forEach((_, c) => {
    const td = row.insertCell();
    const cell = cells[r + "," + c];
    if (cell) {
      td.textContent = cell.text;
      td.className = cell.style;
    }
  });
}
```
